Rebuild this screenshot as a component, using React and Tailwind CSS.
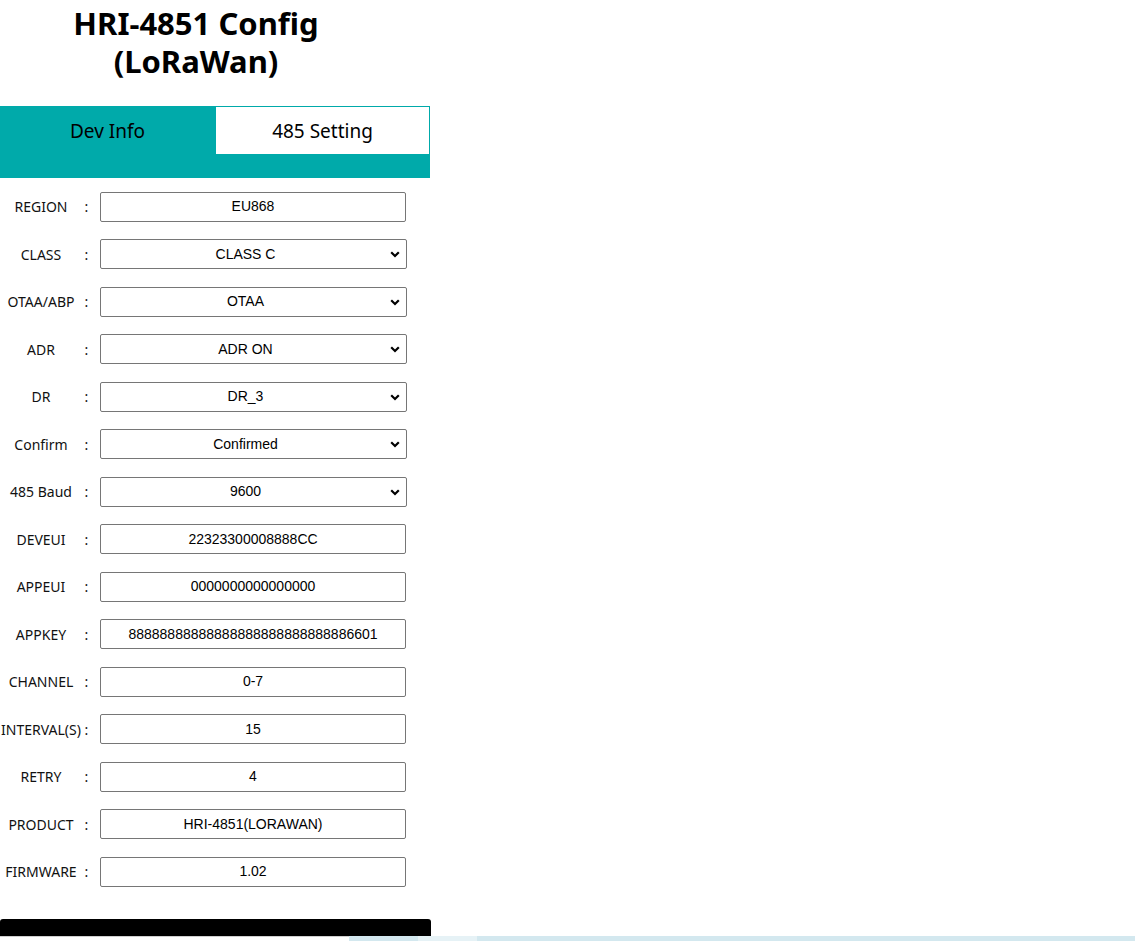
import React from "react";

const rows = [
  { label: "REGION", value: "EU868" },
  { label: "CLASS", value: "CLASS C", select: true },
  { label: "OTAA/ABP", value: "OTAA", select: true },
  { label: "ADR", value: "ADR ON", select: true },
  { label: "DR", value: "DR_3", select: true },
  { label: "Confirm", value: "Confirmed", select: true },
  { label: "485 Baud", value: "9600", select: true },
  { label: "DEVEUI", value: "22323300008888CC" },
  { label: "APPEUI", value: "0000000000000000" },
  { label: "APPKEY", value: "88888888888888888888888888886601" },
  { label: "CHANNEL", value: "0-7" },
  { label: "INTERVAL(S)", value: "15" },
  { label: "RETRY", value: "4" },
  { label: "PRODUCT", value: "HRI-4851(LORAWAN)" },
  { label: "FIRMWARE", value: "1.02" },
];

function Chevron() {
  return (
    <svg width="10" height="7" viewBox="0 0 10 7" className="absolute right-[7px] top-[12px]">
      <path d="M1.2 1.2 L5 5 L8.8 1.2" fill="none" stroke="#000" strokeWidth="2.2" />
    </svg>
  );
}

export default function App() {
  return (
    <div className="relative w-[1135px] h-[941px] bg-white overflow-hidden" style={{ fontFamily: '"Noto Sans", "Open Sans", sans-serif' }}>
      <div className="w-[430px]">
        <h1 className="w-[392px] pt-[4px] text-center text-[31px] leading-[38px] font-bold text-black">
          HRI-4851 Config
          <br />
          (LoRaWan)
        </h1>

        <div className="mt-[26px] bg-[#00aaaa] h-[72px]">
          <div className="flex h-[49px]">
            <div className="w-[215px] flex items-center justify-center pt-[1px] text-[19px] text-black">Dev Info</div>
            <div className="w-[215px] flex items-center justify-center pt-[1px] bg-white border border-[#00aaaa] text-[19px] text-black">485 Setting</div>
          </div>
        </div>

        <div className="pt-[5px]">
          {rows.map((r) => (
            <div key={r.label} className="flex items-center h-[47.5px]">
              <div className="w-[82px] flex justify-center text-[14px] text-[#111] whitespace-nowrap">{r.label}</div>
              <div className="w-[9px] text-[14px] text-[#111] text-center">:</div>
              <div className="ml-[9px] relative">
                <div
                  className={`${r.select ? "w-[307px] pr-[16px]" : "w-[306px]"} h-[30px] border border-[#767676] rounded-[2px] bg-white flex items-center justify-center text-[14px] text-black`}
                  style={{ fontFamily: '"Liberation Sans", Arial, sans-serif' }}
                >
                  {r.value}
                </div>
                {r.select && <Chevron />}
              </div>
            </div>
          ))}
        </div>
      </div>

      <div className="absolute left-0 top-[919px] w-[431px] h-[17px] bg-black rounded-t-[3px]" />
      <div className="absolute left-0 top-[936px] w-[1135px] h-[5px] flex">
        <div className="w-[349px] bg-white border-t border-[#cfcfcf]" />
        <div className="w-[69px] bg-[#d3e8ef]" />
        <div className="w-[59px] bg-[#e6f2f6]" />
        <div className="flex-1 bg-[#d3e8ef]" />
      </div>
    </div>
  );
}
